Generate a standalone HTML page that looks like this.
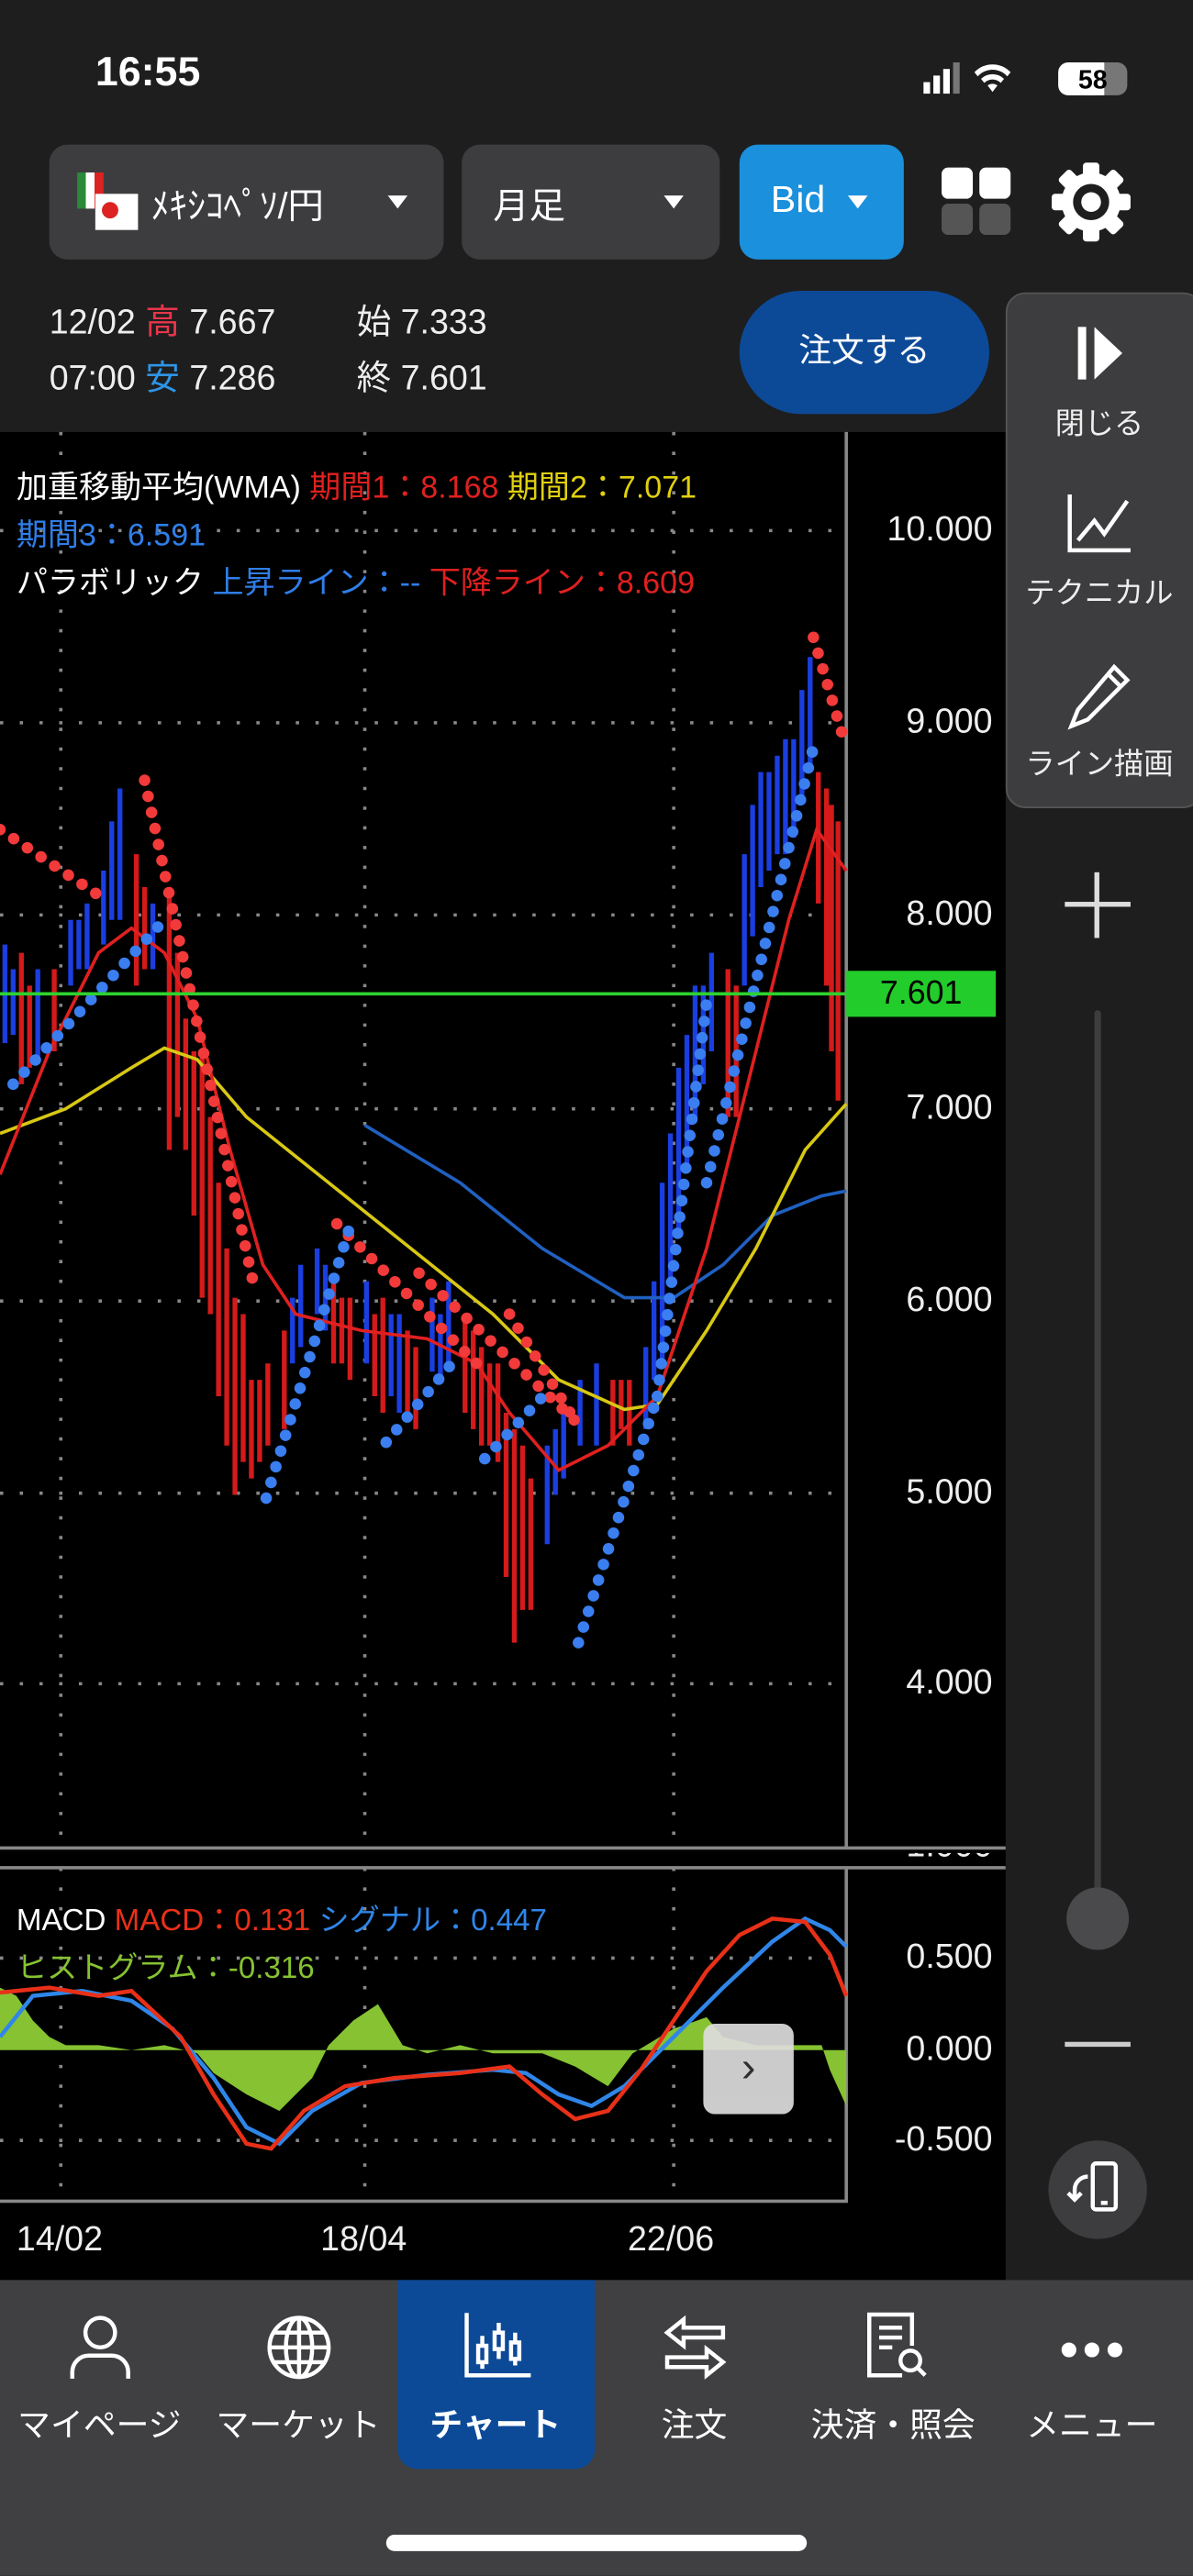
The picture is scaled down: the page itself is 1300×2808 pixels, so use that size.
<!DOCTYPE html>
<html><head><meta charset="utf-8"><style>
*{margin:0;padding:0;box-sizing:border-box}
html,body{width:1300px;height:2808px;overflow:hidden;background:#1e1e1f}
#w{position:absolute;left:0;top:0;width:726px;height:1568px;transform:scale(1.79063);transform-origin:0 0;font-family:"Liberation Sans","Noto Sans CJK JP",sans-serif;color:#fff;background:#1e1e1f}
.a{position:absolute}
.box{position:absolute;background:#3d3d3f;border-radius:11px}
.tri{position:absolute;width:0;height:0;border-left:6px solid transparent;border-right:6px solid transparent;border-top:8px solid #fff}
.pl{position:absolute;left:520px;width:84px;text-align:right;font-size:21px;color:#eee}
.tab{position:absolute;top:1388px;width:121px;height:115px;text-align:center;font-size:18px}
.tab .lb{position:absolute;top:72px;left:-5px;width:131px;font-size:20px;white-space:nowrap}
.rp{position:absolute;left:612px;width:114px;text-align:center;font-size:18px;color:#eee;white-space:nowrap}
</style></head><body><div id="w">
<div class="a" style="left:58px;top:30px;font-size:25px;font-weight:bold">16:55</div>
<svg class="a" style="left:560px;top:36px" width="130" height="24">
<rect x="2" y="14" width="4" height="7" fill="#fff"/><rect x="8" y="10" width="4" height="11" fill="#fff"/><rect x="14" y="6" width="4" height="15" fill="#fff"/><rect x="20" y="2" width="4" height="19" fill="#777"/>
<path d="M44 20 l-3-4 a5 5 0 0 1 6 0z M37 12 a10 10 0 0 1 14 0 l-2 2.5 a7 7 0 0 0 -10 0z M33 8 a15 15 0 0 1 22 0 l-2 2.5 a12 12 0 0 0 -18 0z" fill="#fff"/>
<rect x="84" y="2" width="42" height="20" rx="6" fill="#777"/><rect x="84" y="2" width="28" height="20" rx="6" fill="#fff"/><rect x="100" y="2" width="12" height="20" fill="#fff"/>
<text x="105" y="18" font-size="16" font-weight="bold" text-anchor="middle" fill="#000" font-family="Liberation Sans">58</text></svg>
<div class="box" style="left:30px;top:88px;width:240px;height:70px"></div>
<div class="a" style="left:47px;top:105px;width:16px;height:22px;background:linear-gradient(90deg,#2a8a3a 33%,#fff 33% 66%,#d22 66%)"></div>
<div class="a" style="left:58px;top:118px;width:26px;height:22px;background:#fff"><div style="position:absolute;left:4px;top:5px;width:10px;height:10px;border-radius:50%;background:#d22"></div></div>
<div class="a" style="left:92px;top:108px;font-size:22px">ﾒｷｼｺﾍﾟｿ/円</div>
<div class="tri" style="left:236px;top:119px"></div>
<div class="box" style="left:281px;top:88px;width:157px;height:70px"></div>
<div class="a" style="left:300px;top:108px;font-size:22px">月足</div>
<div class="tri" style="left:404px;top:119px"></div>
<div class="box" style="left:450px;top:88px;width:100px;height:70px;background:#1b90dc"></div>
<div class="a" style="left:469px;top:108px;font-size:23px">Bid</div>
<div class="tri" style="left:516px;top:119px"></div>
<div class="a" style="left:573px;top:102px;width:19px;height:19px;background:#fff;border-radius:4px"></div>
<div class="a" style="left:596px;top:102px;width:19px;height:19px;background:#fff;border-radius:4px"></div>
<div class="a" style="left:573px;top:124px;width:19px;height:19px;background:#555;border-radius:4px"></div>
<div class="a" style="left:596px;top:124px;width:19px;height:19px;background:#555;border-radius:4px"></div>
<svg class="a" style="left:638px;top:97px" width="52" height="52" viewBox="0 0 52 52"><g fill="#fff"><circle cx="26" cy="26" r="18"/><g id="t"><rect x="21" y="2" width="10" height="10" rx="2"/></g><use href="#t" transform="rotate(45 26 26)"/><use href="#t" transform="rotate(90 26 26)"/><use href="#t" transform="rotate(135 26 26)"/><use href="#t" transform="rotate(180 26 26)"/><use href="#t" transform="rotate(225 26 26)"/><use href="#t" transform="rotate(270 26 26)"/><use href="#t" transform="rotate(315 26 26)"/></g><circle cx="26" cy="26" r="11" fill="#1e1e1f"/><circle cx="26" cy="26" r="6" fill="#fff"/></svg>
<div class="a" style="left:30px;top:180px;font-size:21px;line-height:34px;color:#eee;white-space:nowrap">12/02 <span style="color:#e8364a">高</span> 7.667<br>07:00 <span style="color:#2e95e6">安</span> 7.286</div>
<div class="a" style="left:217px;top:180px;font-size:21px;line-height:34px;color:#eee;white-space:nowrap">始 7.333<br>終 7.601</div>
<div class="a" style="left:450px;top:177px;width:152px;height:75px;border-radius:38px;background:#0c4a98;text-align:center;line-height:75px;font-size:20px">注文する</div>
<!-- chart -->
<div class="a" style="left:0;top:263px;width:612px;height:1125px;background:#000"></div>
<svg class="a" style="left:0;top:0" width="612" height="1388" viewBox="0 0 612 1388">
<g stroke="#888" stroke-width="2" stroke-dasharray="2 10" fill="none">
<path d="M0 323H515M0 440H515M0 557H515M0 675H515M0 792H515M0 909H515M0 1025H515M37 263V1125M222 263V1125M410 263V1125M0 1192H515M0 1303H515M37 1137V1340M222 1137V1340M410 1137V1340"/></g>
<path d="M515 263V1125M0 1125H612M0 1137H612M515 1137V1340H0" stroke="#888" stroke-width="2" fill="none"/>
<g stroke-width="3">
<path stroke="#1a3ee0" d="M3 575v60M23 590v55M43 560v40M53 550v40M63 530v45M73 480v80M93 550v40M183 770v50M193 760v40M223 780v50M243 800v60M263 790v45M273 780v50M333 880v60M343 860v40M353 840v40M363 830v50M393 820v50M403 720v110M413 650v100M423 600v80M433 580v60M453 520v80M463 470v70M473 460v60M483 450v60M493 400v70M8 590v40M48 560v30M68 500v60M178 790v40M198 770v40M238 800v50M268 800v40M338 870v40M398 780v60M408 690v90M418 630v80M428 600v60M458 490v80M468 470v60M478 450v70M488 420v70"/>
<path stroke="#d41a1a" d="M13 580v80M33 590v50M83 520v80M103 540v160M113 620v80M123 640v150M133 720v130M143 790v120M153 840v60M163 830v50M173 810v60M203 780v50M213 790v50M233 790v70M253 820v50M283 800v60M293 820v60M303 830v60M313 870v130M323 900v80M373 840v40M383 840v40M443 590v90M503 480v120M510 500v170M18 600v50M88 540v50M108 580v100M118 640v100M128 680v120M138 760v120M148 800v90M158 840v50M208 790v40M228 800v50M248 810v50M288 810v60M298 830v50M308 860v100M318 880v100M378 840v30M448 600v80M498 470v80M506 490v150"/>
</g>
<polyline fill="none" stroke="#2060c0" stroke-width="2" points="222,685 280,720 330,760 380,790 410,790 440,770 470,740 500,728 515,725"/>
<polyline fill="none" stroke="#d8c814" stroke-width="2" points="0,690 40,675 80,650 100,638 120,645 150,680 200,720 250,760 300,800 340,840 380,858 400,855 430,810 460,760 490,700 515,672"/>
<polyline fill="none" stroke="#e02020" stroke-width="2" points="0,715 30,640 60,580 80,565 100,580 120,620 140,700 160,770 180,800 220,810 260,815 290,830 310,860 340,895 370,880 400,850 430,760 460,640 480,560 497,505 515,530"/>
<g stroke-width="7" stroke-linecap="round" stroke-dasharray="0 10" fill="none">
<path stroke="#f23a3a" d="M0 505L60 545M88 475L155 785M205 745L290 830M255 775L350 865M310 800L350 865M495 388L515 455"/>
<path stroke="#3a7ef0" d="M8 660L100 560M162 912L215 740M235 878L275 830M295 888L335 845M352 1000L400 850M400 850L430 610M430 720L495 455"/>
</g>
<path d="M0 605H515" stroke="#2ed22e" stroke-width="2"/>
<path fill="#86c232" d="M0 1210L10 1215L20 1230L30 1240L40 1245L60 1245L80 1248L100 1245L120 1250L130 1262L150 1275L170 1285L190 1265L200 1245L215 1230L230 1220L245 1245L260 1250L280 1245L300 1250L330 1250L350 1258L370 1270L385 1250L410 1235L430 1228L440 1240L460 1245L500 1245L505 1260L515 1282L515 1248L0 1248Z"/>
<polyline fill="none" stroke="#2f86e8" stroke-width="2.5" points="0,1240 20,1215 50,1212 80,1218 105,1235 130,1265 150,1295 170,1305 190,1285 220,1268 260,1263 300,1260 320,1262 340,1275 360,1282 380,1270 410,1240 440,1210 470,1182 490,1168 505,1175 515,1185"/>
<polyline fill="none" stroke="#e83018" stroke-width="2.5" points="0,1213 30,1210 60,1215 80,1212 110,1240 130,1275 150,1305 165,1308 185,1285 210,1270 240,1265 280,1262 310,1258 330,1275 350,1290 370,1285 390,1260 410,1230 430,1200 450,1178 470,1168 490,1170 505,1190 515,1215"/>
</svg>
<div class="a" style="left:515px;top:591px;width:91px;height:28px;background:#22cc2a;color:#000;font-size:20px;text-align:center;line-height:28px">7.601</div>
<div class="pl" style="top:311px">10.000</div><div class="pl" style="top:428px">9.000</div><div class="pl" style="top:545px">8.000</div><div class="pl" style="top:663px">7.000</div><div class="pl" style="top:780px">6.000</div><div class="pl" style="top:897px">5.000</div><div class="pl" style="top:1013px">4.000</div>
<div class="pl" style="top:1128px;height:11px;overflow:hidden;line-height:0"><span style="position:relative;top:-4px">1.000</span></div>
<div class="pl" style="top:1180px">0.500</div><div class="pl" style="top:1236px">0.000</div><div class="pl" style="top:1291px">-0.500</div>
<div class="a" style="left:10px;top:283px;font-size:19px;line-height:29px;white-space:nowrap">加重移動平均(WMA) <span style="color:#e02020">期間1：8.168</span> <span style="color:#e0d010">期間2：7.071</span><br><span style="color:#2f7ee8">期間3：6.591</span><br>パラボリック <span style="color:#2f7ee8">上昇ライン：--</span> <span style="color:#e02020">下降ライン：8.609</span></div>
<div class="a" style="left:10px;top:1154px;font-size:18.5px;line-height:29px;white-space:nowrap">MACD <span style="color:#e83018">MACD：0.131</span> <span style="color:#2f86e8">シグナル：0.447</span><br><span style="color:#86c232">ヒストグラム：-0.316</span></div>
<div class="a" style="left:428px;top:1232px;width:55px;height:55px;background:#ddd;border-radius:7px;opacity:.92;color:#333;font-size:26px;text-align:center;line-height:52px">&#x203A;</div>
<div class="a" style="left:10px;top:1352px;font-size:21px;color:#eee">14/02</div><div class="a" style="left:195px;top:1352px;font-size:21px;color:#eee">18/04</div><div class="a" style="left:382px;top:1352px;font-size:21px;color:#eee">22/06</div>
<!-- right panel -->
<div class="a" style="left:612px;top:178px;width:120px;height:314px;background:#3d3d3f;border-radius:12px;border:1px solid #555"></div>
<svg class="a" style="left:652px;top:197px" width="34" height="36"><rect x="4" y="2" width="5" height="32" fill="#fff"/><path d="M14 2L31 18L14 34Z" fill="#fff"/></svg>
<div class="rp" style="top:244px">閉じる</div>
<svg class="a" style="left:648px;top:299px" width="42" height="40" fill="none" stroke="#fff" stroke-width="2.5"><path d="M3 2V36H40M8 30L18 18L24 26L38 6"/></svg>
<div class="rp" style="top:347px">テクニカル</div>
<svg class="a" style="left:648px;top:402px" width="42" height="44" fill="none" stroke="#fff" stroke-width="2.5"><path d="M30 4L38 12L14 36L4 40L8 30Z M26 8L34 16"/></svg>
<div class="rp" style="top:451px">ライン描画</div>
<div class="a" style="left:648px;top:549px;width:40px;height:3px;background:#ddd"></div><div class="a" style="left:666px;top:531px;width:3px;height:40px;background:#ddd"></div>
<div class="a" style="left:666px;top:615px;width:4px;height:540px;background:#3d3d3f;border-radius:2px"></div>
<div class="a" style="left:649px;top:1149px;width:38px;height:38px;border-radius:50%;background:#4a4a4c"></div>
<div class="a" style="left:648px;top:1243px;width:40px;height:3px;background:#ccc"></div>
<div class="a" style="left:638px;top:1303px;width:60px;height:60px;border-radius:50%;background:#3d3d3f"></div>
<svg class="a" style="left:648px;top:1313px" width="40" height="40" fill="none" stroke="#fff" stroke-width="2.5"><rect x="17" y="4" width="14" height="28" rx="2"/><path d="M22 28h4"/><path d="M14 12a8 8 0 0 0 -8 8v6M2 22l4 4 4-4"/></svg>
<!-- tabs -->
<div class="a" style="left:0;top:1388px;width:726px;height:180px;background:#404042"></div>
<div class="a" style="left:242px;top:1388px;width:120px;height:115px;background:#0c4a98;border-radius:0 0 12px 12px"></div>
<div class="tab" style="left:0"><svg class="a" style="left:40px;top:20px" width="42" height="42" fill="none" stroke="#fff" stroke-width="2.5"><circle cx="21" cy="12" r="9"/><path d="M4 40v-4a10 10 0 0 1 10-10h14a10 10 0 0 1 10 10v4"/></svg><div class="lb">マイページ</div></div>
<div class="tab" style="left:121px"><svg class="a" style="left:40px;top:20px" width="42" height="42" fill="none" stroke="#fff" stroke-width="2.5"><circle cx="21" cy="21" r="18"/><ellipse cx="21" cy="21" rx="8" ry="18"/><path d="M3 21H39M21 3V39M6 12H36M6 30H36"/></svg><div class="lb">マーケット</div></div>
<div class="tab" style="left:241px"><svg class="a" style="left:40px;top:18px" width="44" height="44" fill="none" stroke="#fff" stroke-width="2.5"><path d="M3 2V40H42"/><rect x="10" y="22" width="5" height="10"/><rect x="20" y="14" width="5" height="10"/><rect x="30" y="20" width="5" height="10"/><path d="M12.5 16v6M12.5 32v4M22.5 8v6M22.5 24v6M32.5 14v6M32.5 30v4"/></svg><div class="lb" style="font-weight:bold">チャート</div></div>
<div class="tab" style="left:362px"><svg class="a" style="left:40px;top:20px" width="42" height="42" fill="none" stroke="#fff" stroke-width="2.5"><path d="M14 4L4 12L14 20V15H38V9H14Z M28 22L38 30L28 38V33H4V27H28Z"/></svg><div class="lb">注文</div></div>
<div class="tab" style="left:483px"><svg class="a" style="left:42px;top:18px" width="42" height="44" fill="none" stroke="#fff" stroke-width="2.5"><path d="M24 40H4V3H30V22"/><path d="M10 11H24M10 17H24M10 23H18"/><circle cx="29" cy="31" r="6"/><path d="M33 35l5 5"/></svg><div class="lb">決済・照会</div></div>
<div class="tab" style="left:604px"><div class="a" style="left:42px;top:38px;width:9px;height:9px;border-radius:50%;background:#fff"></div><div class="a" style="left:56px;top:38px;width:9px;height:9px;border-radius:50%;background:#fff"></div><div class="a" style="left:70px;top:38px;width:9px;height:9px;border-radius:50%;background:#fff"></div><div class="lb">メニュー</div></div>
<div class="a" style="left:235px;top:1543px;width:256px;height:10px;border-radius:5px;background:#fff"></div>
</div></body></html>
